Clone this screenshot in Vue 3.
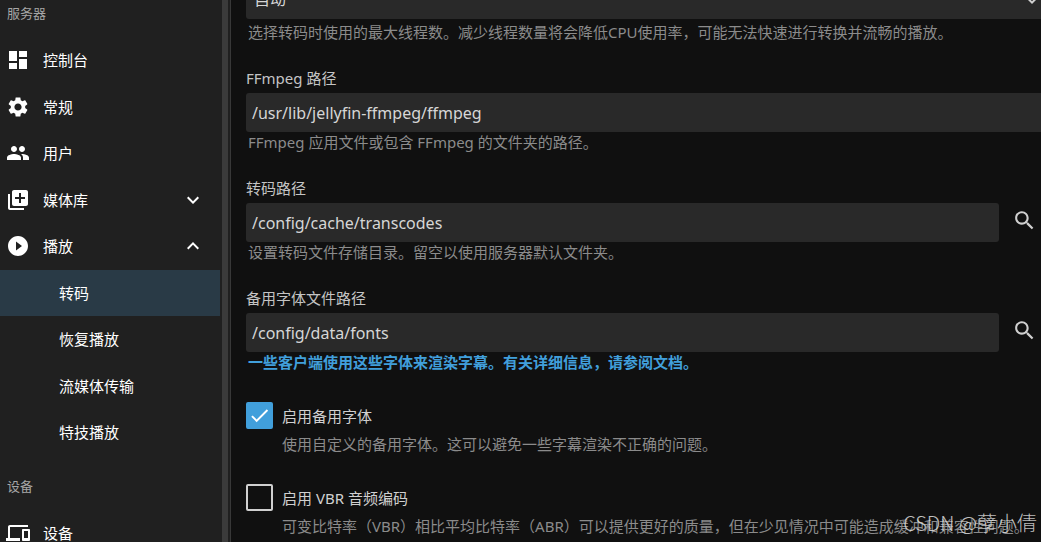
<script setup>
import { ref } from 'vue'

const icons = {
  dashboard: 'M3 13h8V3H3v10zm0 8h8v-6H3v6zm10 0h8V11h-8v10zm0-18v6h8V3h-8z',
  settings:
    'M19.14 12.94c.04-.3.06-.61.06-.94 0-.32-.02-.64-.07-.94l2.03-1.58c.18-.14.23-.41.12-.61l-1.92-3.32c-.12-.22-.37-.29-.59-.22l-2.39.96c-.5-.38-1.03-.7-1.62-.94l-.36-2.54c-.04-.24-.24-.41-.48-.41h-3.84c-.24 0-.43.17-.47.41l-.36 2.54c-.59.24-1.13.57-1.62.94l-2.39-.96c-.22-.08-.47 0-.59.22L2.74 8.87c-.12.21-.08.47.12.61l2.03 1.58c-.05.3-.09.63-.09.94s.02.64.07.94l-2.03 1.58c-.18.14-.23.41-.12.61l1.92 3.32c.12.22.37.29.59.22l2.39-.96c.5.38 1.03.7 1.62.94l.36 2.54c.05.24.24.41.48.41h3.84c.24 0 .44-.17.47-.41l.36-2.54c.59-.24 1.13-.56 1.62-.94l2.39.96c.22.08.47 0 .59-.22l1.92-3.32c.12-.22.07-.47-.12-.61l-2.01-1.58zM12 15.6c-1.98 0-3.6-1.62-3.6-3.6s1.62-3.6 3.6-3.6 3.6 1.62 3.6 3.6-1.62 3.6-3.6 3.6z',
  people:
    'M16 11c1.66 0 2.99-1.34 2.99-3S17.66 5 16 5c-1.66 0-3 1.34-3 3s1.34 3 3 3zm-8 0c1.66 0 2.99-1.34 2.99-3S9.66 5 8 5C6.34 5 5 6.34 5 8s1.34 3 3 3zm0 2c-2.33 0-7 1.17-7 3.5V19h14v-2.5c0-2.33-4.67-3.5-7-3.5zm8 0c-.29 0-.62.02-.97.05 1.16.84 1.97 1.97 1.97 3.45V19h6v-2.5c0-2.33-4.67-3.5-7-3.5z',
  library:
    'M4 6H2v14c0 1.1.9 2 2 2h14v-2H4V6zm16-4H8c-1.1 0-2 .9-2 2v12c0 1.1.9 2 2 2h12c1.1 0 2-.9 2-2V4c0-1.1-.9-2-2-2zm-1 9h-4v4h-2v-4H9V9h4V5h2v4h4v2z',
  play: 'M12 2C6.48 2 2 6.48 2 12s4.48 10 10 10 10-4.48 10-10S17.52 2 12 2zm-2 14.5v-9l6 4.5-6 4.5z',
  devices:
    'M4 6h18V4H4c-1.1 0-2 .9-2 2v11H0v3h14v-3H4V6zm19 2h-6c-.55 0-1 .45-1 1v10c0 .55.45 1 1 1h6c.55 0 1-.45 1-1V9c0-.55-.45-1-1-1zm-1 9h-4v-7h4v7z',
  down: 'M7.41 8.59 12 13.17l4.59-4.58L18 10l-6 6-6-6z',
  up: 'M12 8l-6 6 1.41 1.41L12 10.83l4.59 4.58L18 14z',
  search:
    'M15.5 14h-.79l-.28-.27C15.41 12.59 16 11.11 16 9.5 16 5.91 13.09 3 9.5 3S3 5.91 3 9.5 5.91 16 9.5 16c1.61 0 3.09-.59 4.23-1.57l.27.28v.79l5 4.99L20.49 19l-4.99-5zm-6 0C7.01 14 5 11.99 5 9.5S7.01 5 9.5 5 14 7.01 14 9.5 11.99 14 9.5 14z',
  check: 'M9 16.17 4.83 12l-1.42 1.41L9 19 21 7l-1.41-1.41z',
}

const sections = [
  {
    title: '服务器',
    items: [
      { label: '控制台', icon: 'dashboard' },
      { label: '常规', icon: 'settings' },
      { label: '用户', icon: 'people' },
      { label: '媒体库', icon: 'library', toggle: 'down' },
      {
        label: '播放',
        icon: 'play',
        toggle: 'up',
        children: ['转码', '恢复播放', '流媒体传输', '特技播放'],
      },
    ],
  },
  { title: '设备', items: [{ label: '设备', icon: 'devices' }] },
]
const current = '转码'

const threads = ref('auto')
const ffmpegPath = ref('/usr/lib/jellyfin-ffmpeg/ffmpeg')
const transcodePath = ref('/config/cache/transcodes')
const fontPath = ref('/config/data/fonts')
const fallbackFonts = ref(true)
const vbrAudio = ref(false)
</script>

<template>
  <div class="app">
    <aside class="drawer">
      <nav class="menu">
        <section v-for="section in sections" :key="section.title">
          <h2 class="menu-title">{{ section.title }}</h2>
          <ul>
            <li v-for="item in section.items" :key="item.label">
              <a href="#" class="menu-item">
                <svg class="icon" viewBox="0 0 24 24"><path :d="icons[item.icon]" /></svg>
                <span class="menu-label">{{ item.label }}</span>
                <svg v-if="item.toggle" class="icon" viewBox="0 0 24 24"><path :d="icons[item.toggle]" /></svg>
              </a>
              <ul v-if="item.children">
                <li v-for="child in item.children" :key="child">
                  <a href="#" class="menu-item sub" :class="{ active: child === current }">{{ child }}</a>
                </li>
              </ul>
            </li>
          </ul>
        </section>
      </nav>
      <div class="scrollbar"></div>
    </aside>

    <main class="page">
      <form class="settings" @submit.prevent>
        <div class="field">
          <div class="select-wrap">
            <select v-model="threads" class="control" aria-label="转码线程数">
              <option value="auto">自动</option>
            </select>
            <svg class="icon select-arrow" viewBox="0 0 24 24"><path :d="icons.down" /></svg>
          </div>
          <p class="hint spaced">选择转码时使用的最大线程数。减少线程数量将会降低CPU使用率，可能无法快速进行转换并流畅的播放。</p>
        </div>

        <div class="field">
          <label for="ffmpeg">FFmpeg 路径</label>
          <input id="ffmpeg" v-model="ffmpegPath" class="control" type="text" />
          <p class="hint">FFmpeg 应用文件或包含 FFmpeg 的文件夹的路径。</p>
        </div>

        <div class="field">
          <label for="transcodes">转码路径</label>
          <div class="row">
            <input id="transcodes" v-model="transcodePath" class="control" type="text" />
            <button type="button" class="browse" aria-label="浏览">
              <svg class="icon" viewBox="0 0 24 24"><path :d="icons.search" /></svg>
            </button>
          </div>
          <p class="hint">设置转码文件存储目录。留空以使用服务器默认文件夹。</p>
        </div>

        <div class="field">
          <label for="fonts">备用字体文件路径</label>
          <div class="row">
            <input id="fonts" v-model="fontPath" class="control" type="text" />
            <button type="button" class="browse" aria-label="浏览">
              <svg class="icon" viewBox="0 0 24 24"><path :d="icons.search" /></svg>
            </button>
          </div>
          <p class="hint"><a href="#" class="doc-link">一些客户端使用这些字体来渲染字幕。有关详细信息，请参阅文档。</a></p>
        </div>

        <div class="check-field">
          <label class="check">
            <span class="box">
              <input v-model="fallbackFonts" type="checkbox" />
              <svg v-if="fallbackFonts" class="tick" viewBox="0 0 24 24"><path :d="icons.check" /></svg>
            </span>
            <span>启用备用字体</span>
          </label>
          <p class="hint">使用自定义的备用字体。这可以避免一些字幕渲染不正确的问题。</p>
        </div>

        <div class="check-field">
          <label class="check">
            <span class="box">
              <input v-model="vbrAudio" type="checkbox" />
              <svg v-if="vbrAudio" class="tick" viewBox="0 0 24 24"><path :d="icons.check" /></svg>
            </span>
            <span>启用 VBR 音频编码</span>
          </label>
          <p class="hint">可变比特率（VBR）相比平均比特率（ABR）可以提供更好的质量，但在少见情况中可能造成缓冲和兼容性问题。</p>
        </div>
      </form>
    </main>

    <div class="watermark">CSDN @孽小倩</div>
  </div>
</template>

<style>
body {
  background: #101010;
}
</style>

<style scoped>
.app {
  position: relative;
  display: flex;
  height: 100vh;
  overflow: hidden;
  background: #101010;
  color: #d0d0d0;
  font-family: "Noto Sans", "Noto Sans CJK SC", sans-serif;
  font-size: 15px;
  line-height: 22px;
}

ul,
p,
h2 {
  margin: 0;
  padding: 0;
  list-style: none;
}

.icon {
  display: block;
  flex: none;
  width: 24px;
  height: 24px;
  fill: currentColor;
}

.drawer {
  display: flex;
  flex: none;
  box-sizing: border-box;
  width: 231px;
  overflow: hidden;
  background: #202020;
  border-right: 1px solid #383838;
}

.menu {
  flex: 1;
  margin-top: -17px;
}

.menu-title {
  padding: 20px 7px 14px;
  color: #a6a6a6;
  font-size: 13px;
  font-weight: 400;
  line-height: 20px;
}

.menu-item {
  display: flex;
  align-items: center;
  padding: 12px 15px 12px 6px;
  color: #fff;
  line-height: 1.5;
  text-decoration: none;
}

.menu-item .icon {
  margin: -2px 0;
}

.menu-label {
  flex: 1;
  margin-left: 13px;
}

.menu-item.sub {
  padding-left: 59px;
}

.menu-item.active {
  background: #293a46;
}

.scrollbar {
  width: 6px;
  margin: 0 2px;
  background: #3b3b3b;
}

.page {
  flex: 1;
  min-width: 0;
  overflow: hidden;
}

.settings {
  margin: -20px -5px 0 15px;
}

.field {
  margin-bottom: 25px;
}

.field label {
  display: block;
  margin-bottom: 4px;
  color: #c4c4c4;
}

.control {
  display: block;
  box-sizing: border-box;
  width: 100%;
  height: 39px;
  margin: 0;
  padding: 0 6px;
  appearance: none;
  background: #292929;
  border: 0;
  border-radius: 3px;
  color: #d6d6d6;
  font: inherit;
  font-size: 16px;
}

select.control {
  padding: 0 8px 2px;
}

.select-wrap {
  position: relative;
}

.select-arrow {
  position: absolute;
  right: 2px;
  top: 8px;
}

.row {
  display: flex;
  gap: 4px;
}

.row .control {
  flex: 1;
  min-width: 0;
}

.browse {
  flex: none;
  height: 35px;
  padding: 0 9px;
  background: none;
  border: 0;
  color: #d0d0d0;
}

.browse .icon {
  width: 25px;
  height: 25px;
}

.hint {
  padding-left: 2px;
  color: #8b8b8b;
  line-height: 20px;
  white-space: nowrap;
}

.hint.spaced {
  padding-top: 3px;
}

.doc-link {
  color: #419fdb;
  font-weight: 700;
  text-decoration: none;
}

.check-field {
  margin: 28px 0;
}

.field + .check-field {
  margin-top: 30px;
}

.check {
  display: flex;
  align-items: center;
  gap: 9px;
}

.box {
  position: relative;
  width: 27px;
  height: 27px;
}

.box input {
  display: block;
  box-sizing: border-box;
  width: 100%;
  height: 100%;
  margin: 0;
  appearance: none;
  border: 2px solid #d0d0d0;
  border-radius: 2px;
}

.box input:checked {
  background: #419fdb;
  border-color: #419fdb;
}

.tick {
  position: absolute;
  inset: 2px;
  fill: #fff;
  pointer-events: none;
}

.check-field .hint {
  padding: 5px 0 2px 36px;
}

.watermark {
  position: absolute;
  right: 4px;
  bottom: 5px;
  color: rgba(225, 225, 225, 0.85);
  font-family: "Noto Sans CJK SC", sans-serif;
  font-size: 20px;
  font-weight: 300;
  line-height: 28px;
  white-space: nowrap;
}
</style>
